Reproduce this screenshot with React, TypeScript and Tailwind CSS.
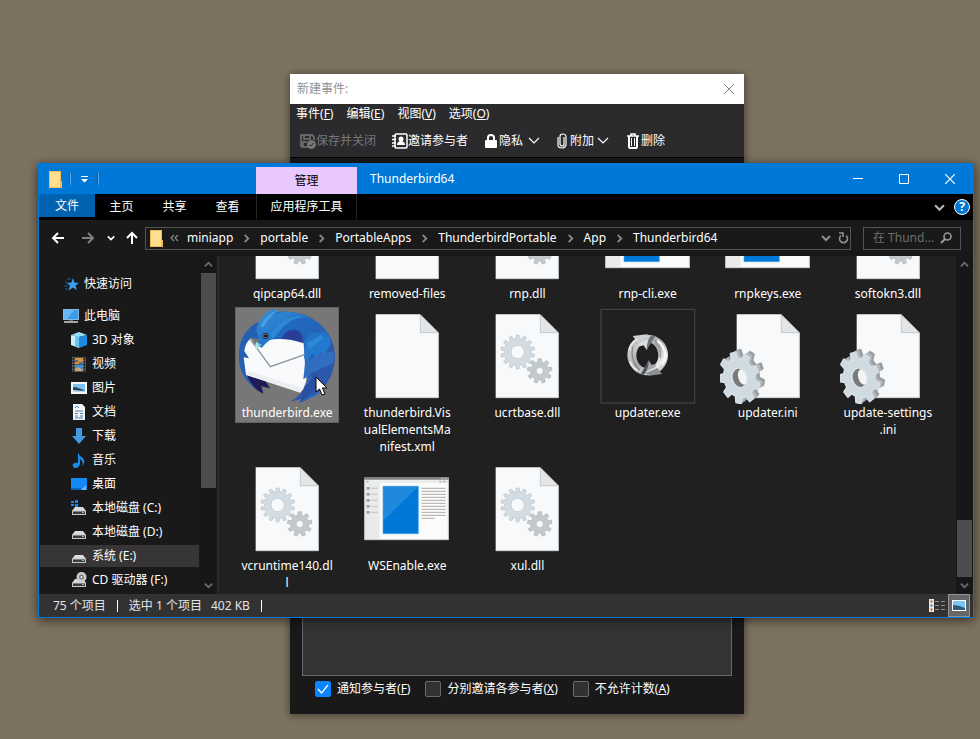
import type { ReactNode } from "react";
import { clsx } from "clsx";

function gearPath(cx: number, cy: number, outer: number, inner: number, teeth: number, squash = 1) {
  const step = (Math.PI * 2) / teeth;
  const points: string[] = [];
  for (let i = 0; i < teeth; i++) {
    const a = i * step - Math.PI / 2;
    const corners = [
      [a - step * 0.3, inner],
      [a - step * 0.19, outer],
      [a + step * 0.19, outer],
      [a + step * 0.3, inner],
    ];
    corners.forEach(([angle, r]) => {
      points.push(`${(cx + Math.cos(angle) * r * squash).toFixed(1)} ${(cy + Math.sin(angle) * r).toFixed(1)}`);
    });
  }
  return `M${points.join("L")}Z`;
}

function holePath(cx: number, cy: number, rx: number, ry: number) {
  return `M${cx - rx} ${cy}a${rx} ${ry} 0 1 0 ${rx * 2} 0a${rx} ${ry} 0 1 0 ${-rx * 2} 0Z`;
}

function Page() {
  return (
    <>
      <path d="M50 19H183L239 74V270H50Z" fill="#f8f9fa" />
      <path d="M51 269H238V74" fill="none" stroke="#c5c8ca" strokeWidth="3" />
      <path d="M184 20V74H238Z" fill="#e3e5e7" stroke="#b4b8bb" strokeWidth="2" />
    </>
  );
}

function FileIcon() {
  return (
    <svg viewBox="0 0 288 288" className="size-24" aria-hidden="true">
      <Page />
    </svg>
  );
}

function DllIcon() {
  return (
    <svg viewBox="0 0 288 288" className="size-24" aria-hidden="true">
      <Page />
      <path
        d={gearPath(116, 132, 51, 40, 14) + holePath(116, 132, 20, 20)}
        fill="#d3dce2"
        stroke="#b9c2c7"
        strokeWidth="2"
        fillRule="evenodd"
      />
      <path
        d={gearPath(182, 189, 37, 27, 9) + holePath(182, 189, 11, 11)}
        fill="#c3cacd"
        stroke="#abb2b5"
        strokeWidth="2"
        fillRule="evenodd"
      />
    </svg>
  );
}

function IniIcon() {
  return (
    <svg viewBox="0 0 288 288" className="size-24" aria-hidden="true">
      <Page />
      <g transform="rotate(-14 65 205)">
        {[18, 14, 10, 6].map((dx) => (
          <path
            key={dx}
            d={gearPath(58 + dx, 208 - dx / 3, 78, 58, 9, 0.76) + holePath(58 + dx, 206, 21, 29)}
            fill={dx > 10 ? "#989c9f" : "#b3b8bb"}
            fillRule="evenodd"
          />
        ))}
        <path d={holePath(60, 206, 23, 30)} fill="#77797b" />
        <path d={holePath(68, 207, 14, 24)} fill="#f4f5f6" />
        <path
          d={gearPath(57, 208, 78, 60, 9, 0.76) + holePath(58, 208, 23, 30)}
          fill="#d0dae1"
          stroke="#d6dfe5"
          strokeWidth="5"
          strokeLinejoin="round"
          fillRule="evenodd"
        />
      </g>
    </svg>
  );
}

function ExeIcon() {
  return (
    <svg viewBox="0 0 288 288" className="size-24" aria-hidden="true">
      <path d="M17 48H269V237H17Z" fill="#fbfbfb" />
      <path d="M17 56H62V237H17Z" fill="#e9ebeb" />
      <path d="M17 56H269V66H17Z" fill="#eceeee" />
      <path d="M17 48H269V56H17Z" fill="#7e8285" />
      <path d="M246 52H250M253 52H257M260 52H264" stroke="#fff" strokeWidth="2" />
      <path d="M22 62H29M240 62H248M252 62H260" stroke="#babdc0" strokeWidth="5" />
      {[82, 100, 118, 136, 154].map((y) => (
        <g key={y}>
          <path d={`M23 ${y}H32`} stroke="#999da0" strokeWidth="8" />
          <path d={`M36 ${y}H56`} stroke="#aeb2b4" strokeWidth="2" />
        </g>
      ))}
      <path d="M72 76H178V218H72Z" fill="#0078d7" />
      <path d="M72 76H178L72 180Z" fill="#1f8adc" />
      <path d="M72 76H178V218H72Z" fill="none" stroke="#4ca3e4" strokeWidth="2" />
      {[82, 91, 100, 109, 118, 127, 136, 145, 154, 163].map((y) => (
        <path key={y} d={`M188 ${y}H260`} stroke="#a9adb0" strokeWidth="3" />
      ))}
      <path d="M188 172H227" stroke="#a9adb0" strokeWidth="3" />
      <path d="M17 56V236H268V56" fill="none" stroke="#c3c6c8" strokeWidth="3" />
    </svg>
  );
}

function UpdaterIcon() {
  return (
    <svg viewBox="0 0 288 288" className="size-24" aria-hidden="true">
      <defs>
        <linearGradient id="steel" x1="0" y1="0" x2="1" y2="1">
          <stop offset="0" stopColor="#8d8f92" />
          <stop offset="0.25" stopColor="#c9cacc" />
          <stop offset="0.5" stopColor="#a4a6a9" />
          <stop offset="0.75" stopColor="#ececed" />
          <stop offset="1" stopColor="#85888c" />
        </linearGradient>
      </defs>
      <rect x="3" y="4" width="281" height="281" fill="#202020" stroke="#4a4a4a" strokeWidth="3" />
      <path
        d={holePath(143, 141, 61, 61) + holePath(142, 142, 33, 39)}
        fill="url(#steel)"
        fillRule="evenodd"
      />
      <path d="M98 84L140 79L150 86L112 102Z" fill="#cfd0d2" />
      <path d="M186 198L146 203L136 196L172 180Z" fill="#8d9095" />
      <path d="M118 104L157 88L140 126L131 112L114 116Z" fill="#dcdddf" />
      <path d="M166 178L128 195L146 157L155 171L170 166Z" fill="#a3a6aa" />
      <path d="M140 126L166 84L154 82Q140 96 140 126Z" fill="#6f7276" />
      <path d="M146 157L122 198L132 201Q146 184 146 157Z" fill="#54575c" />
      <path d="M87 128Q91 106 112 93M90 160Q97 178 112 188" fill="none" stroke="#e8e8e9" strokeWidth="6" />
      <path d="M172 98Q194 114 196 144Q194 160 186 170" fill="none" stroke="#f6f6f6" strokeWidth="8" />
      <path d="M99 116Q92 138 102 162Q108 178 120 186" fill="none" stroke="#85878a" strokeWidth="4" />
      <path d="M164 96Q184 118 181 150" fill="none" stroke="#96989b" strokeWidth="4" />
    </svg>
  );
}

function ThunderbirdIcon() {
  return (
    <svg viewBox="52 156 288 288" className="size-24" aria-hidden="true">
      <defs>
        <linearGradient id="birdBody" x1="0" y1="0" x2="1" y2="1">
          <stop offset="0" stopColor="#1a70cb" />
          <stop offset="0.5" stopColor="#2463b6" />
          <stop offset="1" stopColor="#2e489e" />
        </linearGradient>
        <linearGradient id="birdHead" x1="0" y1="0" x2="1" y2="1">
          <stop offset="0" stopColor="#3a92dc" />
          <stop offset="0.5" stopColor="#2577c9" />
          <stop offset="1" stopColor="#1f64bb" />
        </linearGradient>
      </defs>
      <path
        d="M111 197C77 213 54 247 51 292C48 342 74 389 126 413L118 391L145 396L122 375C98 350 83 333 84 298Q72 272 92 246L112 250Z"
        fill="#2460b3"
      />
      <path d="M76 355C86 384 101 402 125 413L118 390L145 397L132 376Z" fill="#211c55" />
      <path
        d="M126 190C150 160 205 163 248 177C300 195 340 243 340 302C339 362 304 417 234 440L240 428L204 438C235 424 252 397 258 367L244 278L240 250L120 252Z"
        fill="url(#birdBody)"
      />
      <path d="M180 251C188 225 210 216 230 225C241 231 245 246 244 268L160 253Z" fill="#293e94" />
      <path d="M88 247Q71 260 68 285L82 307L66 304L73 357L236 410Q262 379 251 342L246 262Q190 242 139 252L105 277Z" fill="#f9fafc" />
      <path d="M73 356L236 409L246 397L84 346Z" fill="#eceef2" />
      <path d="M86 250L146 332L249 296" fill="none" stroke="#8d93a0" strokeWidth="4" />
      <path
        d="M249 255L265 230L320 228L308 289L294 270L288 302L270 285L258 307L248 280Z"
        fill="#2173c6"
      />
      <path d="M252 272L322 240L328 262L304 303L296 287L285 309L271 291L258 319L247 306Z" fill="#2379cd" />
      <path d="M254 262L300 236L306 246L262 280Z" fill="#2a8ad9" />
      <path d="M250 320L289 294L337 286C339 341 321 388 286 418L234 440L254 412L204 438Q246 419 262 385L246 394L270 355L245 370Z" fill="#326ec0" />
      <path d="M268 352L336 321Q330 365 302 400L234 440L257 405L225 427Q259 397 270 371Z" fill="#2c57ab" />
      <path d="M254 388L283 351L276 398L234 440L246 414L204 438Q238 420 254 388Z" fill="#2a4fa2" />
      <path
        d="M104 226C108 199 126 169 149 161L175 160C166 165 162 169 160 175L186 167C224 167 252 177 270 190Q226 178 197 203Q162 224 154 247Q136 256 120 276L109 267Q116 245 104 226Z"
        fill="url(#birdHead)"
      />
      <path d="M116 210Q134 174 168 161Q138 188 126 214Z" fill="#4a9fe0" />
      <path d="M148 232Q184 177 248 181Q195 191 170 231Q161 245 151 247Z" fill="#2f88d6" />
      <path d="M104 258L118 266L104 281L100 270Z" fill="#a9e6e4" />
      <path d="M109 262L121 266L112 274Z" fill="#65bfcb" />
      <ellipse cx="131" cy="240" rx="9" ry="9" fill="#172d64" />
      <circle cx="130" cy="240" r="6" fill="#b07947" />
      <circle cx="131" cy="240" r="4" fill="#090b13" />
    </svg>
  );
}

function FolderIcon() {
  return (
    <svg viewBox="0 0 13 17" className="h-[17px] w-[13px] shrink-0" aria-hidden="true">
      <path d="M0 0H12V10H13V17H0Z" fill="#edbb58" />
      <path d="M1 1H11V11H12V16H1Z" fill="#ffdf8e" />
      <path d="M11 10H13V17H11Z" fill="#f0b956" />
    </svg>
  );
}

function Chevron({ className, dir = "down" }: { className?: string; dir?: "down" | "up" | "right" }) {
  const d = { down: "M1 3L5 7L9 3", up: "M1 7L5 3L9 7", right: "M3 1L7 5L3 9" }[dir];
  return (
    <svg viewBox="0 0 10 10" className={clsx("shrink-0", className)} fill="none" stroke="currentColor" aria-hidden="true">
      <path d={d} strokeWidth="2" />
    </svg>
  );
}

function SmallIcon({ children }: { children: ReactNode }) {
  return (
    <svg viewBox="0 0 16 16" className="size-4 shrink-0" aria-hidden="true">
      {children}
    </svg>
  );
}

const drive = (
  <>
    <path d="M4 7H12L15 11H1Z" fill="#d9dcdf" />
    <path d="M1 10.500H15V15H1Z" fill="#c3c7ca" />
    <path d="M2 11.500H14V14H2Z" fill="#3a3d40" />
    <path d="M11 12.500H13" stroke="#8bd17c" />
  </>
);

const icons: Record<string, ReactNode> = {
  star: (
    <>
      <path d="M10 2L11.500 6.500L16 7L12.500 9.500L14 14L10 11.500L5.500 14.500L7 9.500L3.500 7L8.500 6.500Z" fill="#3aa0f3" />
      <path d="M4 3H8M2 6H4M1 10H5M2 13H5" stroke="#1763b0" />
    </>
  ),
  pc: (
    <>
      <path d="M0 1H16V12H0Z" fill="#8ab9e0" />
      <path d="M1 2H15V11H1Z" fill="#3b9cea" />
      <path d="M1 2H11L4 11H1Z" fill="#66b8f5" />
      <path d="M6 12H10V13H6Z" fill="#5a6269" />
      <path d="M1 14H15" stroke="#cfd5da" strokeWidth="1.500" />
    </>
  ),
  cube: (
    <>
      <path d="M8 0L16 3L8 5L0 3Z" fill="#9bdcf7" />
      <path d="M0 3L8 5V16L0 13Z" fill="#cdeefb" />
      <path d="M4 4L8 5V16L4 14Z" fill="#6cc4f0" />
      <path d="M8 5L16 3V13L8 16Z" fill="#1f8be0" />
    </>
  ),
  video: (
    <>
      <path d="M1 1H15V16H1Z" fill="#57595b" />
      <path d="M4 2H12V8H4Z" fill="#d9913f" />
      <path d="M4 9H12V15H4Z" fill="#3e8fd0" />
      <path d="M4 4H7V6H4ZM8 6H12V8H8Z" fill="#4a6f95" />
      <path d="M4 13L7 11L12 14V15H4Z" fill="#d0a070" />
      <path d="M2.500 2V16M13.500 2V16" stroke="#111" strokeWidth="1.500" strokeDasharray="1.5 1.5" />
    </>
  ),
  picture: (
    <>
      <path d="M0 2H16V14H0Z" fill="#f3f5f7" />
      <path d="M2 4H14V12H2Z" fill="#7cc2f2" />
      <path d="M2 7Q7 7 14 11V12H2Z" fill="#2b4358" />
      <path d="M2 10L14 11V12H2Z" fill="#b4d9ef" />
    </>
  ),
  doc: (
    <>
      <path d="M2 0H11L14 3V16H2Z" fill="#f3f5f7" />
      <path d="M4 4L6 2L8 4M4 7H12M4 9.500H7M9 9.500H12M4 12H7M9 12H12M4 14H12" stroke="#4d84b5" fill="none" />
    </>
  ),
  download: <path d="M5 0H11V8H15L8 16L1 8H5Z" fill="#4398e2" />,
  music: <path d="M7 0Q8 4 12 6Q15 10 11 14Q13 10 9 7V12Q8 16 4 16Q1 15 2 12Q4 10 7 11Z" fill="#188df0" />,
  desktop: (
    <>
      <path d="M0 2H16V14H0Z" fill="#1489f5" />
      <path d="M0 13H10" stroke="#0665c0" strokeWidth="2" />
      <path d="M11 13H15M13 11H15" stroke="#c9e2fa" strokeWidth="1" />
    </>
  ),
  system: (
    <>
      {drive}
      <path d="M0 1H3V3H0ZM4 0H7V3H4ZM0 4H3V6H0ZM4 4H7V7H4Z" fill="#1389f0" />
    </>
  ),
  drive: <>{drive}</>,
  cd: (
    <>
      {drive}
      <circle cx="10.500" cy="5" r="5" fill="#c9cdd0" />
      <circle cx="10.500" cy="5" r="2.500" fill="#74797d" />
      <circle cx="10.500" cy="5" r="1" fill="#f6f6f6" />
    </>
  ),
};

const places = [
  { icon: "cube", label: "3D 对象" },
  { icon: "video", label: "视频" },
  { icon: "picture", label: "图片" },
  { icon: "doc", label: "文档" },
  { icon: "download", label: "下载" },
  { icon: "music", label: "音乐" },
  { icon: "desktop", label: "桌面" },
  { icon: "system", label: "本地磁盘 (C:)" },
  { icon: "drive", label: "本地磁盘 (D:)" },
  { icon: "drive", label: "系统 (E:)", selected: true },
  { icon: "cd", label: "CD 驱动器 (F:)" },
];

const files = [
  { icon: DllIcon, lines: ["qipcap64.dll"] },
  { icon: FileIcon, lines: ["removed-files"] },
  { icon: DllIcon, lines: ["rnp.dll"] },
  { icon: ExeIcon, lines: ["rnp-cli.exe"] },
  { icon: ExeIcon, lines: ["rnpkeys.exe"] },
  { icon: DllIcon, lines: ["softokn3.dll"] },
  { icon: ThunderbirdIcon, lines: ["thunderbird.exe"], selected: true },
  { icon: FileIcon, lines: ["thunderbird.Vis", "ualElementsMa", "nifest.xml"] },
  { icon: DllIcon, lines: ["ucrtbase.dll"] },
  { icon: UpdaterIcon, lines: ["updater.exe"] },
  { icon: IniIcon, lines: ["updater.ini"] },
  { icon: IniIcon, lines: ["update-settings", ".ini"] },
  { icon: DllIcon, lines: ["vcruntime140.dl", "l"] },
  { icon: ExeIcon, lines: ["WSEnable.exe"] },
  { icon: DllIcon, lines: ["xul.dll"] },
];

const crumbs = ["miniapp", "portable", "PortableApps", "ThunderbirdPortable", "App", "Thunderbird64"];

const menus = [
  { label: "事件", accessKey: "F" },
  { label: "编辑", accessKey: "E" },
  { label: "视图", accessKey: "V" },
  { label: "选项", accessKey: "O" },
];

const options = [
  { id: "notify", label: "通知参与者", accessKey: "F", checked: true },
  { id: "separate", label: "分别邀请各参与者", accessKey: "X", checked: false },
  { id: "counter", label: "不允许计数", accessKey: "A", checked: false },
];

function EventWindow() {
  return (
    <section className="absolute top-[74px] left-[290px] w-[454px] bg-[#19191a] text-white shadow-[0_1px_8px_rgba(0,0,0,0.5)]">
      <header className="flex h-[30px] items-center justify-between bg-white pr-[7px] pl-[7px] text-[#8e9499]">
        <h2>新建事件:</h2>
        <button aria-label="关闭" className="flex size-4 items-center justify-center">
          <svg viewBox="0 0 12 12" className="size-3" stroke="#85888c" aria-hidden="true">
            <path d="M1 1L11 11M11 1L1 11" />
          </svg>
        </button>
      </header>
      <div className="border-b border-black bg-[#2b2b2d]">
        <nav className="flex h-5 items-center gap-[13px] px-[6px]">
          {menus.map((menu) => (
            <button key={menu.label}>
              {menu.label}(<u>{menu.accessKey}</u>)
            </button>
          ))}
        </nav>
        <div className="flex h-[33px] items-center px-[10px]">
          <button className="flex items-center text-[#77777a]">
            <svg viewBox="0 0 16 16" className="size-4" fill="none" stroke="currentColor" aria-hidden="true">
              <path d="M8 14H2L1 13V2H12L14 4V7" strokeWidth="1.500" />
              <path d="M4 2V6H10V2M3 13V9H7" strokeWidth="1.500" />
              <circle cx="11.500" cy="11.500" r="4" fill="currentColor" />
              <path d="M9.500 11.500L11 13L13.500 10" stroke="#2b2b2d" />
            </svg>
            保存并关闭
          </button>
          <button className="ml-4 flex items-center">
            <svg viewBox="0 0 16 16" className="size-4" fill="none" stroke="currentColor" aria-hidden="true">
              <rect x="3" y="1" width="12" height="14" rx="1" strokeWidth="1.500" />
              <path d="M0 3H4M0 6.500H4M0 10H4M0 13H4" strokeWidth="1.500" />
              <circle cx="9" cy="6" r="2.500" fill="currentColor" stroke="none" />
              <path d="M5 12Q5 9 8 8H10Q13 9 13 12Z" fill="currentColor" stroke="none" />
            </svg>
            邀请参与者
          </button>
          <button className="ml-4 flex items-center gap-px">
            <svg viewBox="0 0 14 16" className="h-4 w-[14px]" aria-hidden="true">
              <path d="M4 7V4.500Q4 2 7 2Q10 2 10 4.500V7" fill="none" stroke="currentColor" strokeWidth="2" />
              <rect x="1" y="7" width="12" height="8" rx="1" fill="currentColor" />
            </svg>
            隐私
            <svg viewBox="0 0 12 8" className="ml-1 h-2 w-3" fill="none" stroke="currentColor" aria-hidden="true">
              <path d="M1 1L6 6L11 1" strokeWidth="1.200" />
            </svg>
          </button>
          <button className="ml-[17px] flex items-center gap-[3px]">
            <svg viewBox="0 0 10 16" className="h-4 w-[10px]" fill="none" stroke="currentColor" aria-hidden="true">
              <path d="M7 4V11Q7 13 5 13Q3 13 3 11V4Q3 1 5.500 1Q9 1 9 4V12Q8 15 5 15Q1 15 1 12V4" strokeWidth="1.200" />
            </svg>
            附加
            <svg viewBox="0 0 12 8" className="h-2 w-3" fill="none" stroke="currentColor" aria-hidden="true">
              <path d="M1 1L6 6L11 1" strokeWidth="1.200" />
            </svg>
          </button>
          <button className="ml-[17px] flex items-center gap-px">
            <svg viewBox="0 0 14 16" className="h-4 w-[14px]" fill="none" stroke="currentColor" aria-hidden="true">
              <path d="M1 3H13M5 3V1H9V3" strokeWidth="1.500" />
              <path d="M3 3V14Q3 15 4 15H10Q11 15 11 14V3" strokeWidth="2" />
              <path d="M5.500 5V13M8.500 5V13" />
            </svg>
            删除
          </button>
        </div>
      </div>
      <div className="px-3 pt-3">
        <textarea
          aria-label="描述"
          className="block h-[506px] w-full resize-none border border-[#68686a] bg-[#343436] outline-none"
        />
      </div>
      <div className="flex gap-[15px] px-[25px] pt-[5px] pb-[17px]">
        {options.map((option) => (
          <label key={option.id} htmlFor={option.id} className="relative flex h-4 items-center gap-[6px]">
            <input
              id={option.id}
              type="checkbox"
              defaultChecked={option.checked}
              className="peer size-4 appearance-none rounded-xs border border-[#6a6a6c] bg-[#313133] checked:border-[#0a84ff] checked:bg-[#0a84ff]"
            />
            <svg
              viewBox="0 0 16 16"
              className="pointer-events-none absolute top-0 left-0 hidden size-4 peer-checked:block"
              fill="none"
              stroke="white"
              aria-hidden="true"
            >
              <path d="M3 8L6.500 12L13 4" strokeWidth="1.200" />
            </svg>
            <span>
              {option.label}(<u>{option.accessKey}</u>)
            </span>
          </label>
        ))}
      </div>
    </section>
  );
}

function TitleBar() {
  return (
    <header className="flex h-[30px] items-stretch bg-[#0078d7]">
      <div className="flex w-[217px] items-center gap-[7px] pl-[10px]">
        <FolderIcon />
        <span className="h-3 w-[2px] border-r border-[#5aa5e2] bg-[#195ba5]" />
        <button aria-label="自定义快速访问工具栏" className="flex size-3 items-center justify-center">
          <svg viewBox="0 0 9 8" className="h-2 w-[9px]" aria-hidden="true">
            <path d="M1 1.500H8" stroke="white" />
            <path d="M1 4H8L4.500 7.500Z" fill="white" />
          </svg>
        </button>
        <span className="h-3 w-[2px] border-r border-[#5aa5e2] bg-[#195ba5]" />
      </div>
      <div className="mt-[3px] flex w-[101px] items-center justify-center bg-[#e8c8ff] text-black">管理</div>
      <h1 className="flex items-center pl-[13px]">Thunderbird64</h1>
      <div className="ml-auto flex">
        <button aria-label="最小化" className="flex w-[46px] items-center justify-center">
          <svg viewBox="0 0 10 10" className="size-[10px]" stroke="white" aria-hidden="true">
            <path d="M0 4.500H10" />
          </svg>
        </button>
        <button aria-label="最大化" className="flex w-[46px] items-center justify-center">
          <svg viewBox="0 0 10 10" className="size-[10px]" stroke="white" fill="none" aria-hidden="true">
            <path d="M0.500 0.500H9.500V9.500H0.500Z" />
          </svg>
        </button>
        <button aria-label="关闭" className="flex w-[46px] items-center justify-center">
          <svg viewBox="0 0 10 10" className="size-[10px]" stroke="white" aria-hidden="true">
            <path d="M0 0L10 10M10 0L0 10" strokeWidth="1.200" />
          </svg>
        </button>
      </div>
    </header>
  );
}

function Ribbon() {
  return (
    <nav className="flex h-[26px] items-start bg-black">
      <div className="flex w-[217px]">
        <button className="h-[23px] w-14 bg-[#0063b1]">文件</button>
        {["主页", "共享", "查看"].map((tab) => (
          <button key={tab} className="h-[25px] w-[53px]">
            {tab}
          </button>
        ))}
      </div>
      <button className="h-[25px] w-[101px] border-x border-[#242424]">应用程序工具</button>
      <div className="ml-auto flex h-full items-center gap-[9px] pr-[3px]">
        <button aria-label="展开功能区" className="text-[#b5b5b5]">
          <Chevron className="size-[11px]" />
        </button>
        <button
          aria-label="帮助"
          className="flex size-4 items-center justify-center rounded-full border border-white bg-[#0078d7] font-bold"
        >
          ?
        </button>
      </div>
    </nav>
  );
}

function AddressBar() {
  return (
    <div className="flex h-9 items-center gap-3 bg-[#191919] px-3">
      <div className="flex flex-1 items-center">
        <div className="flex w-[94px] items-center">
          <button aria-label="后退">
            <svg viewBox="0 0 14 14" className="size-[14px]" fill="none" stroke="white" strokeWidth="2" aria-hidden="true">
              <path d="M13 7H2M7 2L2 7L7 12" />
            </svg>
          </button>
          <button aria-label="前进" className="ml-4">
            <svg viewBox="0 0 14 14" className="size-[14px]" fill="none" stroke="#808080" strokeWidth="2" aria-hidden="true">
              <path d="M1 7H12M7 2L12 7L7 12" />
            </svg>
          </button>
          <button aria-label="最近浏览的位置" className="ml-3">
            <Chevron className="size-2" />
          </button>
          <button aria-label="上移" className="ml-[10px]">
            <svg viewBox="0 0 14 14" className="size-[14px]" fill="none" stroke="white" strokeWidth="2" aria-hidden="true">
              <path d="M7 13V2M2 7L7 2L12 7" />
            </svg>
          </button>
        </div>
        <div className="flex h-[23px] flex-1 items-center border border-[#535353] pl-1">
          <FolderIcon />
          <svg viewBox="0 0 9 8" className="mr-2 ml-[7px] h-2 w-[9px]" fill="none" stroke="#8a8a8a" aria-hidden="true">
            <path d="M4 1L1 4L4 7M8 1L5 4L8 7" strokeWidth="1.200" />
          </svg>
          <ol className="flex items-center gap-[9px]">
            {crumbs.map((crumb, index) => (
              <li key={crumb} className="flex items-center gap-[9px]">
                {index > 0 && <Chevron dir="right" className="size-[9px] text-[#8a8a8a]" />}
                <a href="#">{crumb}</a>
              </li>
            ))}
          </ol>
          <div className="ml-auto flex items-center gap-[7px] pr-px text-[#8f8f8f]">
            <button aria-label="以前的位置">
              <Chevron className="size-[10px]" />
            </button>
            <button aria-label="刷新">
              <svg viewBox="0 0 11 12" className="h-3 w-[11px]" fill="none" stroke="currentColor" aria-hidden="true">
                <path d="M8 3.500A4 4 0 1 1 3 3.500" strokeWidth="1.600" />
                <path d="M1 1H5V5" strokeWidth="1.600" />
              </svg>
            </button>
          </div>
        </div>
      </div>
      <div className="flex h-[23px] w-[98px] items-center border border-[#535353] pr-2 pl-[9px]">
        <input
          type="text"
          aria-label="搜索"
          placeholder="在 Thund..."
          className="w-0 flex-1 bg-transparent outline-none placeholder:text-[#6e6e6e]"
        />
        <svg viewBox="0 0 12 12" className="size-3" fill="none" stroke="#9b9b9b" aria-hidden="true">
          <circle cx="7.500" cy="4.500" r="3.500" strokeWidth="1.600" />
          <path d="M5 7L1 11" strokeWidth="2" />
        </svg>
      </div>
    </div>
  );
}

function ScrollBar({ children }: { children: ReactNode }) {
  return (
    <div className="flex w-[17px] shrink-0 flex-col items-center bg-[#171717] text-[#6d6d6d]">
      <Chevron dir="up" className="my-[4px] size-[9px]" />
      <div className="flex w-[15px] flex-1 flex-col">{children}</div>
      <Chevron className="my-[4px] size-[9px]" />
    </div>
  );
}

function Sidebar() {
  return (
    <aside className="flex w-[180px] shrink-0 border-r-2 border-[#2a2a2a] bg-[#191919]">
      <ul className="flex-1 pt-4">
        <li className="mb-2 flex h-6 items-center gap-[5px] pl-6">
          <SmallIcon>{icons.star}</SmallIcon>
          快速访问
        </li>
        <li className="flex h-6 items-center gap-[5px] pl-6">
          <SmallIcon>{icons.pc}</SmallIcon>
          此电脑
        </li>
        {places.map((place) => (
          <li key={place.label} className="py-px">
            <a
              href="#"
              className={clsx("mx-px flex h-[22px] items-center gap-[5px] pl-[31px]", place.selected && "bg-[#373535]")}
            >
              <SmallIcon>{icons[place.icon]}</SmallIcon>
              {place.label}
            </a>
          </li>
        ))}
      </ul>
      <ScrollBar>
        <div className="h-[215px] bg-[#4d4d4d]" />
      </ScrollBar>
    </aside>
  );
}

function FileGrid() {
  return (
    <ul className="-mt-[68px] grid flex-1 auto-rows-min grid-cols-6 px-2">
      {files.map((file) => {
        const Icon = file.icon;
        return (
          <li key={file.lines[0]} className="px-2 pb-[3px]">
            <div
              className={clsx(
                "flex flex-col items-center border pb-px",
                file.selected ? "border-[#626262] bg-[#777777]" : "border-transparent"
              )}
            >
              <Icon />
              <p className="text-center leading-[17px] whitespace-nowrap">
                {file.lines.map((line) => (
                  <span key={line} className="block">
                    {line}
                  </span>
                ))}
              </p>
            </div>
          </li>
        );
      })}
    </ul>
  );
}

function StatusBar() {
  return (
    <footer className="flex h-[23px] items-center bg-[#333233] pr-[3px] pl-[14px] text-[#e4e4e4]">
      <span>75 个项目</span>
      <span className="mx-[11px] h-3 w-px bg-white" />
      <span>选中 1 个项目</span>
      <span className="ml-[9px]">402 KB</span>
      <span className="mx-[11px] h-3 w-px bg-white" />
      <div className="ml-auto flex items-center gap-[3px]">
        <button aria-label="详细信息">
          <svg viewBox="0 0 16 13" className="h-[13px] w-4" aria-hidden="true">
            <path d="M0 0H5V13H0Z" fill="#e9e9e9" />
            <path d="M1.500 2.500H3.500M1.500 10.500H3.500" stroke="#b4692f" strokeWidth="2" />
            <path d="M1.500 6.500H3.500" stroke="#2e7fc4" strokeWidth="2" />
            <path d="M6 2.500H10M12 2.500H16M6 6.500H10M12 6.500H16M6 10.500H10M12 10.500H16" stroke="#8d8d8d" />
          </svg>
        </button>
        <button aria-label="大图标" className="flex h-[23px] w-[22px] items-center justify-center border border-[#949494] bg-[#666567]">
          <svg viewBox="0 0 14 11" className="h-[11px] w-[14px]" aria-hidden="true">
            <path d="M0 0H14V11H0Z" fill="white" />
            <path d="M1 1H13V10H1Z" fill="#7dc6f3" />
            <path d="M1 5Q7 5 13 8V10H1Z" fill="#2d5a7d" />
          </svg>
        </button>
      </div>
    </footer>
  );
}

function ExplorerWindow() {
  return (
    <section className="absolute top-[163px] right-[6px] left-[38px] border border-[#0078d7] text-white shadow-[0_2px_10px_rgba(0,0,0,0.6)]">
      <TitleBar />
      <Ribbon />
      <AddressBar />
      <div className="flex h-[338px] overflow-hidden bg-[#202020]">
        <Sidebar />
        <FileGrid />
        <ScrollBar>
          <div className="mt-auto h-[57px] bg-[#4d4d4d]" />
        </ScrollBar>
      </div>
      <StatusBar />
    </section>
  );
}

export default function App() {
  return (
    <main className="relative min-h-screen overflow-hidden bg-[#7d715f] font-['Noto_Sans','Noto_Sans_CJK_SC',sans-serif] text-[12px] leading-4">
      <EventWindow />
      <ExplorerWindow />
      <svg viewBox="0 0 13 20" className="pointer-events-none absolute top-[376px] left-[315px] h-5 w-[13px]" aria-hidden="true">
        <path d="M1 1V16L4.500 13L7 19L10 18L7.500 12H12Z" fill="white" stroke="black" />
      </svg>
    </main>
  );
}
